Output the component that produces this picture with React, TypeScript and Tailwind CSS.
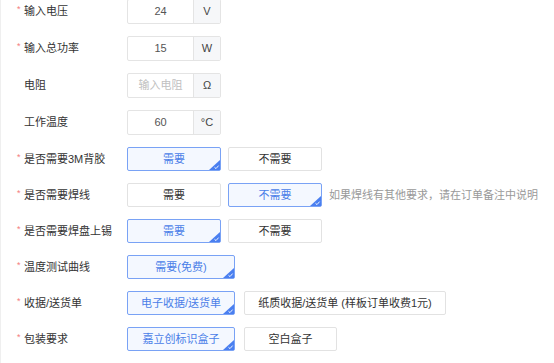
import React from "react";

const font = { fontFamily: '"Liberation Sans", "Noto Sans CJK SC", sans-serif' };

function Label({ text, req }: { text: string; req?: boolean }) {
  return (
    <div className="w-[126px] shrink-0 pl-[16px] flex items-center">
      <span className="w-[7px] text-[#f47c7c] text-[9px] leading-none -mt-[4px]">{req ? "*" : ""}</span>
      <span className="text-[11px] text-[#333]">{text}</span>
    </div>
  );
}

function Check() {
  return (
    <span className="absolute right-0 bottom-0 w-[11px] h-[10px]">
      <svg width="11" height="10" viewBox="0 0 11 10" className="block">
        <polygon points="11,0 11,10 0,10" fill="#4a7ff0" />
        <path d="M5.5 7.3 L7 8.6 L9.6 5.6" stroke="#fff" strokeWidth="0.9" fill="none" />
      </svg>
    </span>
  );
}

function Btn({ text, sel, w }: { text: string; sel?: boolean; w: string }) {
  return (
    <div
      className={
        "relative h-6 rounded-[2px] border flex items-center justify-center text-[11px] " +
        w +
        (sel ? " border-[#79a2f5] bg-[#f4f8ff] text-[#4a7ee8]" : " border-[#e2e2e2] bg-white text-[#333]")
      }
    >
      {text}
      {sel && <Check />}
    </div>
  );
}

function InputRow({ label, req, value, placeholder, unit }: { label: string; req?: boolean; value?: string; placeholder?: string; unit: string }) {
  return (
    <div className="flex items-center h-[25px]">
      <Label text={label} req={req} />
      <div className="w-[94px] h-[25px] border border-[#e4e4e4] rounded-[2px] flex overflow-hidden">
        <div className={"w-[65px] flex items-center justify-center text-[11px] " + (value ? "text-[#555]" : "text-[#c0c0c0]")}>
          {value ?? placeholder}
        </div>
        <div className="flex-1 bg-[#f6f7f9] border-l border-[#e4e4e4] flex items-center justify-center text-[11px] text-[#444]">
          {unit}
        </div>
      </div>
    </div>
  );
}

function BtnRow({ label, children }: { label: string; children: React.ReactNode }) {
  return (
    <div className="flex items-center h-6">
      <Label text={label} req />
      {children}
    </div>
  );
}

export default function App() {
  return (
    <div style={font} className="w-[554px] h-[363px] overflow-hidden bg-white border-l border-[#efefef]">
      <div className="flex flex-col gap-3 -mt-px">
        <InputRow label="输入电压" req value="24" unit="V" />
        <InputRow label="输入总功率" req value="15" unit="W" />
        <InputRow label="电阻" placeholder="输入电阻" unit="Ω" />
        <InputRow label="工作温度" value="60" unit="°C" />
        <BtnRow label="是否需要3M背胶">
          <div className="flex gap-[7px]">
            <Btn text="需要" sel w="w-[94px]" />
            <Btn text="不需要" w="w-[94px]" />
          </div>
        </BtnRow>
        <BtnRow label="是否需要焊线">
          <div className="flex gap-[7px] items-center">
            <Btn text="需要" w="w-[94px]" />
            <Btn text="不需要" sel w="w-[94px]" />
            <span className="text-[11px] text-[#999]">如果焊线有其他要求，请在订单备注中说明</span>
          </div>
        </BtnRow>
        <BtnRow label="是否需要焊盘上锡">
          <div className="flex gap-[7px]">
            <Btn text="需要" sel w="w-[94px]" />
            <Btn text="不需要" w="w-[94px]" />
          </div>
        </BtnRow>
        <BtnRow label="温度测试曲线">
          <Btn text="需要(免费)" sel w="w-[108px]" />
        </BtnRow>
        <BtnRow label="收据/送货单">
          <div className="flex gap-[9px]">
            <Btn text="电子收据/送货单" sel w="w-[108px]" />
            <Btn text="纸质收据/送货单 (样板订单收费1元)" w="w-[202px]" />
          </div>
        </BtnRow>
        <BtnRow label="包装要求">
          <div className="flex gap-[9px]">
            <Btn text="嘉立创标识盒子" sel w="w-[108px]" />
            <Btn text="空白盒子" w="w-[93px]" />
          </div>
        </BtnRow>
      </div>
    </div>
  );
}
